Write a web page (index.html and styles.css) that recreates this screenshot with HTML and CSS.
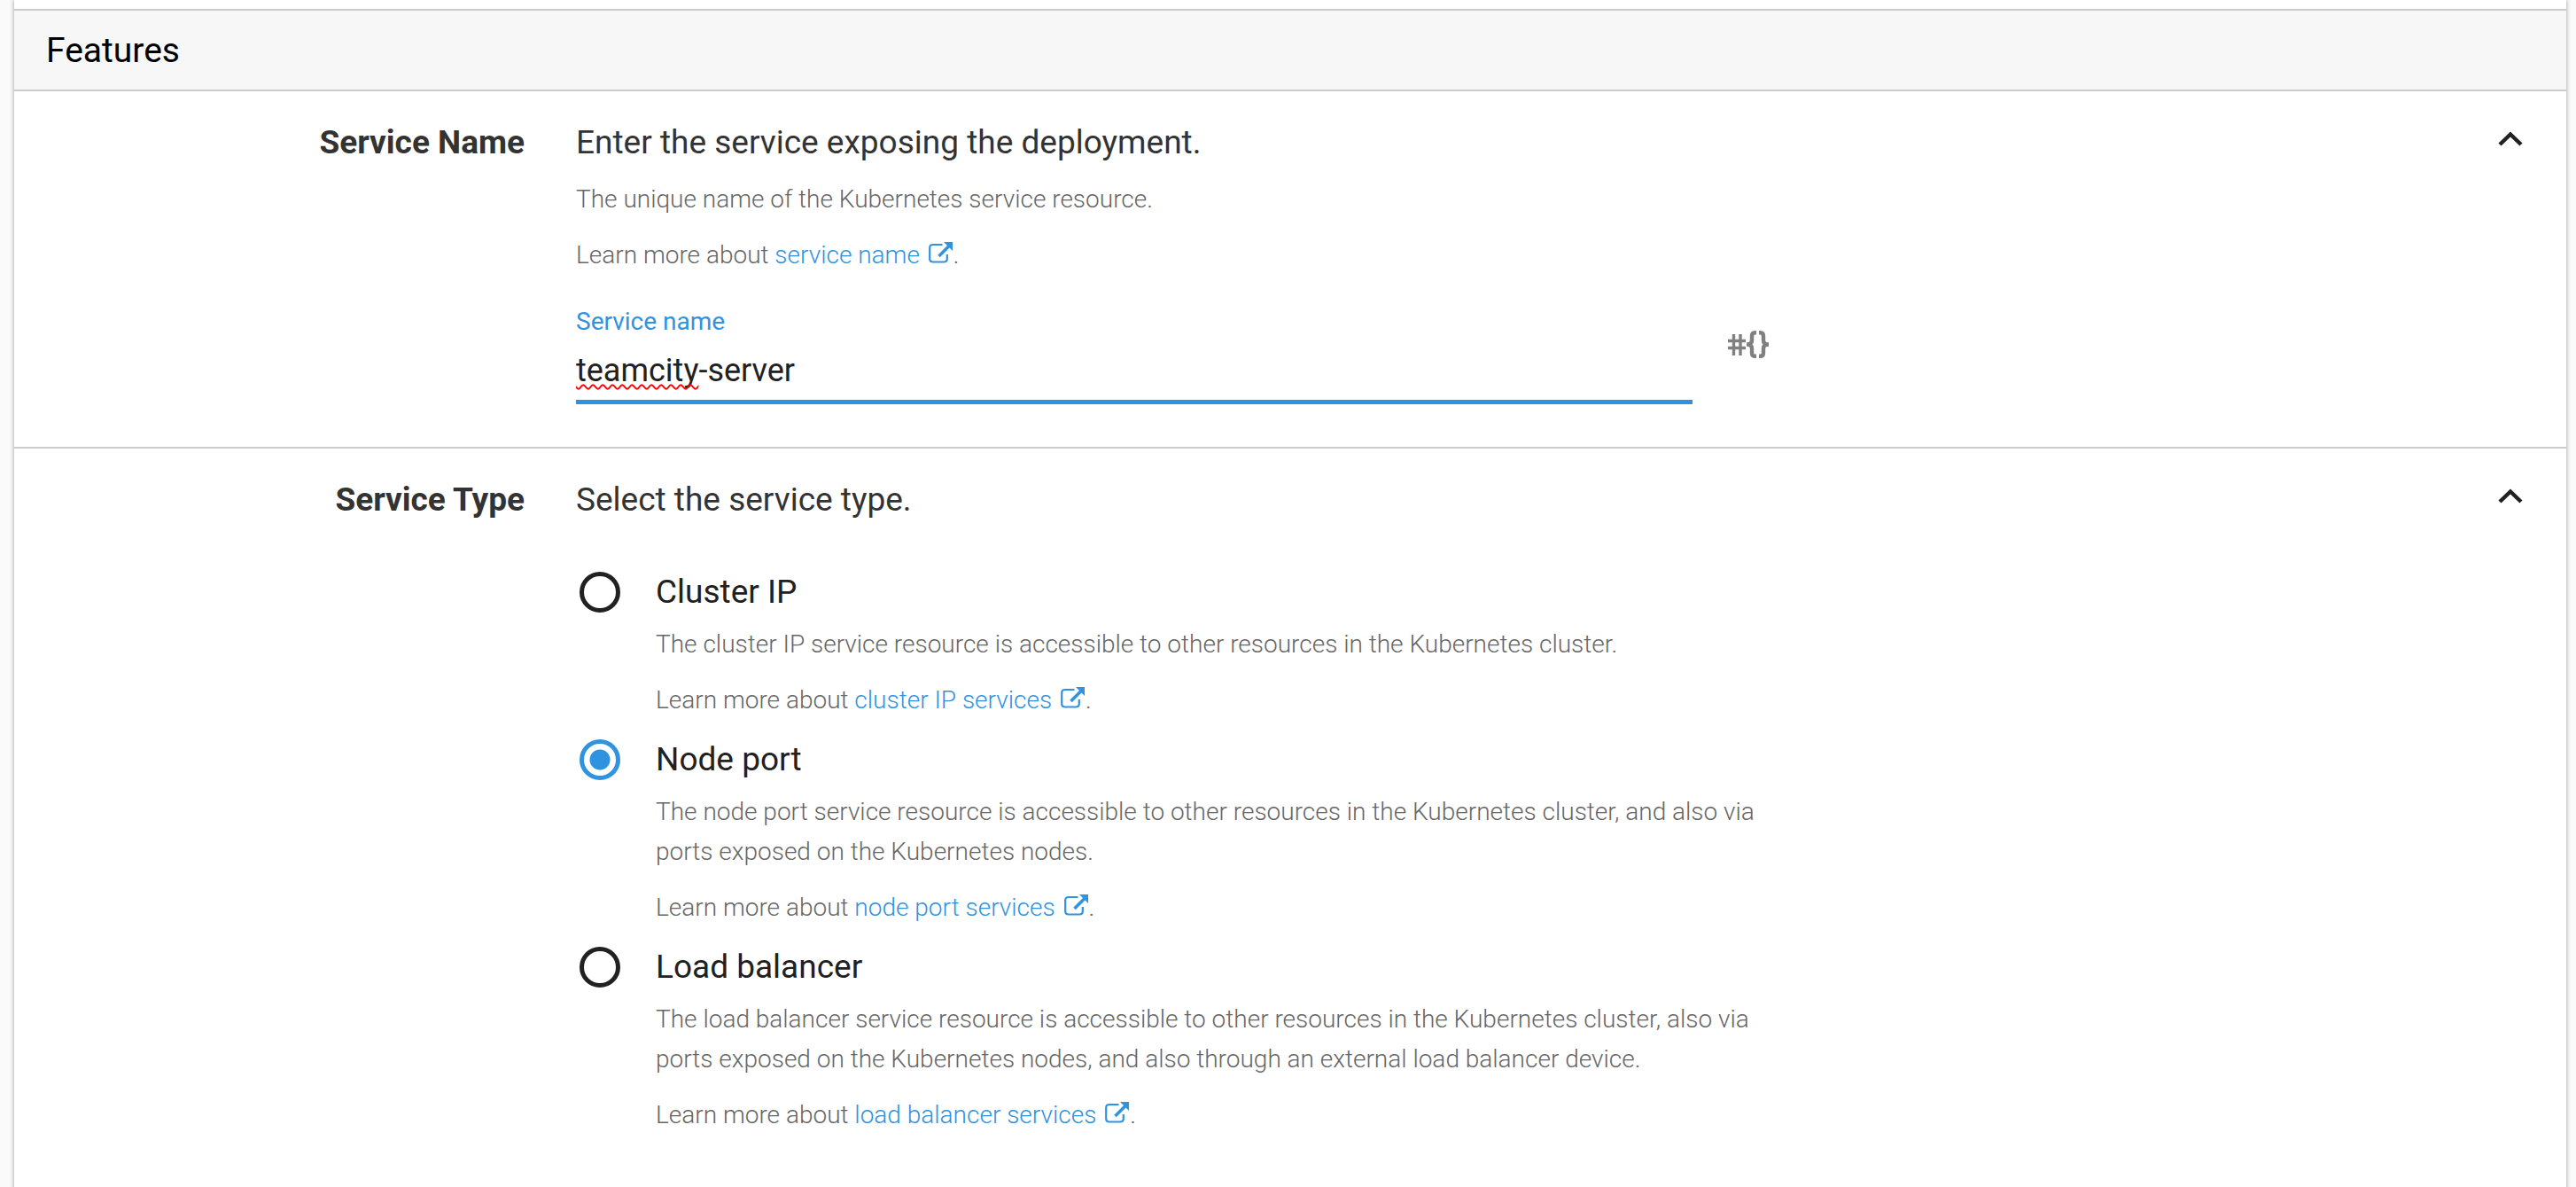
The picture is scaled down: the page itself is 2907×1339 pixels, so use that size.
FILE: index.html
```html
<!DOCTYPE html>
<html lang="en">
<head>
<meta charset="utf-8">
<title>Features</title>
<link rel="stylesheet" href="styles.css">
</head>
<body>
<svg width="0" height="0" class="sprite" aria-hidden="true">
  <symbol id="external" viewBox="0 0 28 24">
    <path d="M15.500 3H5Q1.200 3 1.200 6.500V19Q1.200 22.500 5 22.500H17Q20.800 22.500 20.800 19V14" fill="none" stroke="currentColor" stroke-width="2.200"/>
    <path d="M11.500 16L23 4.500" fill="none" stroke="currentColor" stroke-width="3.600"/>
    <path d="M17 0H27V10Z" fill="currentColor"/>
  </symbol>
  <symbol id="chevron" viewBox="0 0 28 18">
    <path d="M2 15L14 3.500L26 15" fill="none" stroke="currentColor" stroke-width="4.500"/>
  </symbol>
</svg>
<main class="card">
  <h2 class="card-title">Features</h2>
  <section class="row">
    <h3 class="row-name">Service Name</h3>
    <div class="row-body">
      <p class="lead">Enter the service exposing the deployment.</p>
      <p class="help">The unique name of the Kubernetes service resource.</p>
      <p class="help">Learn more about <a href="#service-name">service name <svg class="external"><use href="#external"/></svg></a>.</p>
      <div class="field">
        <div class="field-main">
          <label class="field-label" for="service">Service name</label>
          <div class="field-box">
            <input class="field-input" id="service" type="text" value="teamcity-server" spellcheck="false">
            <span class="misspelled" aria-hidden="true">teamcity</span>
          </div>
        </div>
        <button class="bind" type="button" aria-label="Bind to a variable">
          <svg class="bind-icon" viewBox="0 0 46 32"><path d="M6.500 4V28M14 4V28M0 11.500H20M0 19.500H20" fill="none" stroke="currentColor" stroke-width="3.400"/><path d="M32 2.200H30.500Q27 2.200 27 6V11Q27 15.500 21 15.500Q27 15.500 27 20V25Q27 28.800 30.500 28.800H32M35 2.200H36.500Q40 2.200 40 6V11Q40 15.500 46 15.500Q40 15.500 40 20V25Q40 28.800 36.500 28.800H35" fill="none" stroke="currentColor" stroke-width="4.400"/></svg>
        </button>
      </div>
    </div>
    <button class="toggle" type="button" aria-label="Collapse service name"><svg class="chevron"><use href="#chevron"/></svg></button>
  </section>
  <section class="row">
    <h3 class="row-name">Service Type</h3>
    <div class="row-body">
      <p class="lead">Select the service type.</p>
      <div class="options">
        <div class="option">
          <input class="radio" type="radio" name="type" id="cluster">
          <div class="option-body">
            <label class="option-label" for="cluster">Cluster IP</label>
            <p class="help">The cluster IP service resource is accessible to other resources in the Kubernetes cluster.</p>
            <p class="help">Learn more about <a href="#cluster-ip">cluster IP services <svg class="external"><use href="#external"/></svg></a>.</p>
          </div>
        </div>
        <div class="option">
          <input class="radio" type="radio" name="type" id="node" checked>
          <div class="option-body">
            <label class="option-label" for="node">Node port</label>
            <p class="help">The node port service resource is accessible to other resources in the Kubernetes cluster, and also via ports exposed on the Kubernetes nodes.</p>
            <p class="help">Learn more about <a href="#node-port">node port services <svg class="external"><use href="#external"/></svg></a>.</p>
          </div>
        </div>
        <div class="option">
          <input class="radio" type="radio" name="type" id="balancer">
          <div class="option-body">
            <label class="option-label" for="balancer">Load balancer</label>
            <p class="help">The load balancer service resource is accessible to other resources in the Kubernetes cluster, also via ports exposed on the Kubernetes nodes, and also through an external load balancer device.</p>
            <p class="help">Learn more about <a href="#load-balancer">load balancer services <svg class="external"><use href="#external"/></svg></a>.</p>
          </div>
        </div>
      </div>
    </div>
    <button class="toggle" type="button" aria-label="Collapse service type"><svg class="chevron"><use href="#chevron"/></svg></button>
  </section>
</main>
</body>
</html>
```
FILE: styles.css
```css
* { box-sizing: border-box; }
body {
  margin: 0;
  min-height: 100vh;
  display: flex;
  background: #fafafa;
  color: #212121;
  font-family: Roboto, "Liberation Sans", sans-serif;
  font-size: 37px;
  line-height: 54px;
}
h2, h3, p { margin: 0; font-size: inherit; }
.sprite { position: absolute; }
.card {
  flex: 1;
  margin: 0 11px 0 16px;
  padding-top: 10px;
  background: #fff;
  box-shadow: 0 0 5px rgba(0, 0, 0, 0.4);
}
.card-title {
  padding: 18px 36px 17px;
  border-top: 2px solid #ccc;
  border-bottom: 2px solid #ccc;
  background: #f7f7f7;
  color: #000;
  font-size: 39px;
  font-weight: 400;
}
.row {
  display: grid;
  grid-template-columns: 20% minmax(0, 1350px) 1fr;
  column-gap: 58px;
  padding: 31px 0 48px;
}
.row + .row { border-top: 2px solid #ccc; }
.row-name { color: #333; font-weight: 700; text-align: right; }
.lead { color: #333; }
.help {
  margin-bottom: 18px;
  color: #666;
  font-size: 28px;
  font-weight: 300;
  line-height: 45px;
}
.lead + .help { margin-top: 14px; }
a { color: #2f93e0; text-decoration: none; }
.external { width: 28px; height: 24px; margin-left: 3px; }
.field { display: flex; align-items: center; gap: 40px; margin-top: 30px; }
.field-main { flex: 1; }
.field-label { display: block; color: #2f93e0; font-size: 28px; line-height: 45px; }
.field-box { position: relative; }
.field-input {
  display: block;
  width: 100%;
  height: 71px;
  padding: 0;
  border: 0;
  border-bottom: 5px solid #2f93e0;
  outline: 0;
  background: none;
  color: #212121;
  font: inherit;
  font-size: 36px;
}
.misspelled {
  position: absolute;
  top: 0;
  left: 0;
  color: transparent;
  font-size: 36px;
  line-height: 70px;
  text-decoration: underline wavy #f00 2px;
  text-decoration-skip-ink: none;
  pointer-events: none;
}
button { padding: 0; border: 0; background: none; cursor: pointer; }
.bind { width: 50px; margin-bottom: 18px; color: #808080; }
.bind-icon { display: block; width: 46px; height: 32px; }
.toggle {
  justify-self: end;
  align-self: start;
  margin: 14px 49px 0 0;
  color: #212121;
}
.chevron { display: block; width: 28px; height: 18px; }
.options { margin-top: 50px; }
.option { display: flex; gap: 40px; }
.radio {
  flex: none;
  appearance: none;
  width: 46px;
  height: 46px;
  margin: 4px 0 0 4px;
  border: 5px solid #212121;
  border-radius: 50%;
}
.radio:checked {
  border-color: #2f93e0;
  background: radial-gradient(circle, #2f93e0 11px, transparent 12px);
}
.option-label { display: block; margin-bottom: 10px; line-height: 53px; }
```
